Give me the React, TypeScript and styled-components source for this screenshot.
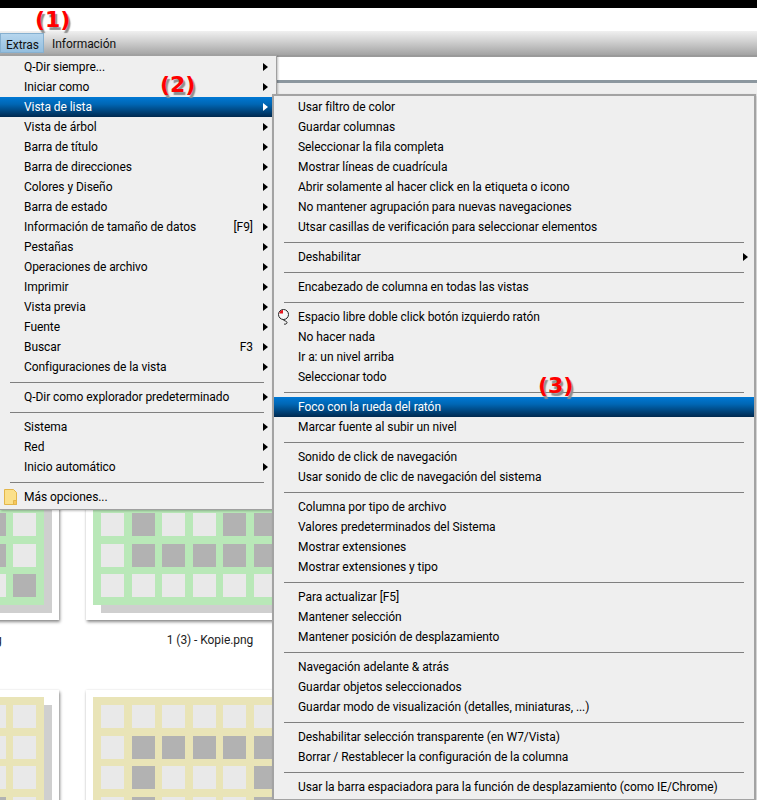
import React from "react";
import styled, { createGlobalStyle } from "styled-components";

const Global = createGlobalStyle`
  html, body { margin: 0; padding: 0; background: #fff; }
  body { font-family: "Roboto", "Noto Sans", sans-serif; font-size: 12px; letter-spacing: -0.06px; color: #000; }
`;

const Page = styled.div`
  position: relative;
  width: 757px;
  height: 800px;
  overflow: hidden;
  background: #fff;
  display: flex;
  flex-direction: column;
`;
const BlackBar = styled.div`height: 8px; background: #000; flex: none;`;
const TitleArea = styled.div`height: 23px; background: #fff; flex: none;`;
const MenuBar = styled.div`
  height: 24px;
  flex: none;
  display: flex;
  align-items: stretch;
  background: linear-gradient(#f0f0f0 0%, #cfcfcf 45%, #a3a3a3 100%);
`;
const TopItem = styled.div<{ $active?: boolean }>`
  padding: 0 6px 0 ${(p) => (p.$active ? "5px" : "8px")};
  line-height: 27px;
  box-sizing: border-box;
  color: #111;
  ${(p) => p.$active && `
    width: 44px;
    margin: 2px 0;
    background: linear-gradient(#b6d6ee, #94bede);
    border: 1px solid #86b0d0;
    line-height: 22px;
  `}
`;
const Toolbar = styled.div`
  height: 25px;
  flex: none;
  background: #fff;
  border-bottom: 3px solid #8c979f;
  box-shadow: inset 0 2px 0 #9a9a9a;
`;
const Content = styled.div`
  flex: 1;
  background: #fff;
  padding-top: 40px;
  overflow: hidden;
  box-shadow: inset 0 12px 0 #efefef;
`;
const ThumbRows = styled.div`
  display: grid;
  grid-template-columns: repeat(2, 244px);
  grid-auto-rows: 283.5px;
  column-gap: 27px;
  margin-left: -185px;
`;
const ThumbCell = styled.div`display: flex; flex-direction: column; align-items: center;`;
const Card = styled.div`
  position: relative;
  width: 244px;
  height: 213.5px;
  box-sizing: border-box;
  background: #fff;
  box-shadow: 1px 2px 3px rgba(0, 0, 0, 0.45), 0 0 2px rgba(0, 0, 0, 0.08);
  padding: 7px;
`;
const Sheet = styled.div<{ $color: string }>`
  width: 222px;
  height: 191px;
  background: ${(p) => p.$color};
  box-shadow: 8px 8px 0 #cfcfcf;
  box-sizing: border-box;
  padding: 8px;
  display: grid;
  grid-template-columns: repeat(7, 23px);
  grid-auto-rows: 23px;
  gap: 7.5px;
`;
const Pixel = styled.div<{ $on: boolean }>`background: ${(p) => (p.$on ? "#b2b2b2" : "#e9e9e9")};`;
const ThumbLabel = styled.div`
  margin: 12px 0 0 4px;
  line-height: 16px;
  color: #222;
  white-space: nowrap;
`;

const Menu = styled.div<{ $left: number; $top: number; $width: number; $height: number }>`
  position: absolute;
  left: ${(p) => p.$left}px;
  top: ${(p) => p.$top}px;
  width: ${(p) => p.$width}px;
  height: ${(p) => p.$height}px;
  box-sizing: border-box;
  background: #efefef;
  border: 1px solid #a0a0a0;
  box-shadow: 1px 1px 2px rgba(0,0,0,.25);
`;
const LeftMenu = styled(Menu)`
  padding: 1px 3px 1px 0;
  border-left: none;
`;
const SubMenu = styled(Menu)`
  padding: 1px 0 0 0;
  border-width: 2px;
  border-color: #a3a3a3;
  border-bottom-width: 1px;
`;
const Row = styled.div<{ $sel?: boolean; $indent: number }>`
  position: relative;
  height: 20px;
  box-sizing: border-box;
  padding-top: 1px;
  line-height: 19px;
  padding-left: ${(p) => p.$indent}px;
  white-space: nowrap;
  color: ${(p) => (p.$sel ? "#fff" : "#000")};
  ${(p) => p.$sel && `background: linear-gradient(#0078d4 0%, #0067b5 35%, #00294f 100%);`}
`;
const Shortcut = styled.span`
  position: absolute;
  right: 20px;
  top: 1px;
`;
const Arrow = styled.svg<{ $right: number }>`
  position: absolute;
  right: ${(p) => p.$right}px;
  top: 6px;
  width: 5px;
  height: 8px;
`;
const RowIcon = styled.svg<{ $left: number }>`
  position: absolute;
  left: ${(p) => p.$left}px;
  top: 1px;
  width: 18px;
  height: 18px;
`;
const Sep = styled.div<{ $left: number; $right: number }>`
  height: 10px;
  position: relative;
  &::after {
    content: "";
    position: absolute;
    left: ${(p) => p.$left}px;
    right: ${(p) => p.$right}px;
    top: 5px;
    height: 1px;
    background: #7f7f7f;
  }
`;
const Note = styled.div<{ $left: number; $top: number }>`
  position: absolute;
  left: ${(p) => p.$left}px;
  top: ${(p) => p.$top}px;
  font-family: "DejaVu Sans", sans-serif;
  font-weight: 700;
  font-size: 22px;
  letter-spacing: 0;
  line-height: 24px;
  color: #ff0000;
  text-shadow: 2px 3px 1px #8f8f8f;
  white-space: nowrap;
`;

type Item = { t?: string; arrow?: boolean; sel?: boolean; key?: string; icon?: "folder" | "mouse" };

const left: Item[] = [
  { t: "Q-Dir siempre...", arrow: true },
  { t: "Iniciar como", arrow: true },
  { t: "Vista de lista", arrow: true, sel: true },
  { t: "Vista de árbol", arrow: true },
  { t: "Barra de título", arrow: true },
  { t: "Barra de direcciones", arrow: true },
  { t: "Colores y Diseño", arrow: true },
  { t: "Barra de estado", arrow: true },
  { t: "Información de tamaño de datos", arrow: true, key: "[F9]" },
  { t: "Pestañas", arrow: true },
  { t: "Operaciones de archivo", arrow: true },
  { t: "Imprimir", arrow: true },
  { t: "Vista previa", arrow: true },
  { t: "Fuente", arrow: true },
  { t: "Buscar", arrow: true, key: "F3" },
  { t: "Configuraciones de la vista", arrow: true },
  {},
  { t: "Q-Dir como explorador predeterminado", arrow: true },
  {},
  { t: "Sistema", arrow: true },
  { t: "Red", arrow: true },
  { t: "Inicio automático", arrow: true },
  {},
  { t: "Más opciones...", icon: "folder" },
];

const sub: Item[] = [
  { t: "Usar filtro de color" },
  { t: "Guardar columnas" },
  { t: "Seleccionar la fila completa" },
  { t: "Mostrar líneas de cuadrícula" },
  { t: "Abrir solamente al hacer click en la etiqueta o icono" },
  { t: "No mantener agrupación para nuevas navegaciones" },
  { t: "Utsar casillas de verificación para seleccionar elementos" },
  {},
  { t: "Deshabilitar", arrow: true },
  {},
  { t: "Encabezado de columna en todas las vistas" },
  {},
  { t: "Espacio libre doble click botón izquierdo ratón", icon: "mouse" },
  { t: "No hacer nada" },
  { t: "Ir a: un nivel arriba" },
  { t: "Seleccionar todo" },
  {},
  { t: "Foco con la rueda del ratón", sel: true },
  { t: "Marcar fuente al subir un nivel" },
  {},
  { t: "Sonido de click de navegación" },
  { t: "Usar sonido de clic de navegación del sistema" },
  {},
  { t: "Columna por tipo de archivo" },
  { t: "Valores predeterminados del Sistema" },
  { t: "Mostrar extensiones" },
  { t: "Mostrar extensiones y tipo" },
  {},
  { t: "Para actualizar [F5]" },
  { t: "Mantener selección" },
  { t: "Mantener posición de desplazamiento" },
  {},
  { t: "Navegación adelante & atrás" },
  { t: "Guardar objetos seleccionados" },
  { t: "Guardar modo de visualización (detalles, miniaturas, ...)" },
  {},
  { t: "Deshabilitar selección transparente (en W7/Vista)" },
  { t: "Borrar / Restablecer la configuración de la columna" },
  {},
  { t: "Usar la barra espaciadora para la función de desplazamiento (como IE/Chrome)" },
];

const FolderIcon = () => (
  <RowIcon $left={3} viewBox="0 0 18 18">
    <path d="M1.500 1.500h9l3 3v12h-12z" fill="#fbe08a" stroke="#e3b64a" />
    <path d="M10.500 16.500v-4h3v4z" fill="#f6c65a" stroke="#e3b64a" />
  </RowIcon>
);
const MouseIcon = () => (
  <RowIcon $left={2} viewBox="0 0 18 18">
    <circle cx="7.500" cy="6.500" r="5" fill="#f7f7f7" stroke="#222" />
    <path d="M3.500 5.500C3.500 3.500 5 2 7 2v3.500z" fill="#e8141c" />
    <path d="M7 11.500c1 1.500 4 1.500 4 3s-2 2-3 1.500" fill="none" stroke="#222" />
  </RowIcon>
);

const renderItems = (items: Item[], indent: number, sepL: number, sepR: number, arrowRight: number) =>
  items.map((it, i) =>
    it.t ? (
      <Row key={i} $sel={it.sel} $indent={indent}>
        {it.icon === "folder" && <FolderIcon />}
        {it.icon === "mouse" && <MouseIcon />}
        {it.t}
        {it.key && <Shortcut>{it.key}</Shortcut>}
        {it.arrow && (
          <Arrow $right={arrowRight} viewBox="0 0 5 8">
            <path d="M0 0l5 4-5 4z" fill={it.sel ? "#fff" : "#000"} />
          </Arrow>
        )}
      </Row>
    ) : (
      <Sep key={i} $left={sepL} $right={sepR} />
    )
  );

const parse = (s: string) => s.split("").map((c) => c === "#");

// 6 rows, 7 columns; the leading rows lie under the menus.
const greenLeft = [".......", ".......", ".......", ".....#.", ".....#.", "......#"];
const greenRight = [".......", ".......", ".......", ".#..##.", ".#####.", "......."];
const yellowLeft = [".......", ".......", ".......", ".....#.", ".....#.", "......."];
const yellowRight = [".......", ".#####.", ".#...#.", ".#...#.", ".#...#.", "......."];

const Thumb = ({ color, rows, label }: { color: string; rows: string[]; label: string }) => (
  <ThumbCell>
    <Card>
      <Sheet $color={color}>
        {rows.flatMap((r, y) => parse(r).map((on, x) => <Pixel key={`${y}-${x}`} $on={on} />))}
      </Sheet>
    </Card>
    <ThumbLabel>{label}</ThumbLabel>
  </ThumbCell>
);

export default function App() {
  return (
    <Page>
      <Global />
      <BlackBar />
      <TitleArea />
      <MenuBar>
        <TopItem $active>Extras</TopItem>
        <TopItem>Información</TopItem>
      </MenuBar>
      <Toolbar />
      <Content>
        <ThumbRows>
          <Thumb color="#b9e8b8" rows={greenLeft} label="1 (2) - Kopie - Kopie.png" />
          <Thumb color="#b9e8b8" rows={greenRight} label="1 (3) - Kopie.png" />
          <Thumb color="#b9e8b8" rows={greenLeft} label="1 (2) - Kopie - Kopie.png" />
          <Thumb color="#b9e8b8" rows={greenRight} label="1 (3) - Kopie.png" />
          <Thumb color="#e9e4b7" rows={yellowLeft} label="2.png" />
          <Thumb color="#e9e4b7" rows={yellowRight} label="3.png" />
        </ThumbRows>
      </Content>
      <LeftMenu $left={0} $top={55} $width={277} $height={455}>
        {renderItems(left, 24, 10, 9, 5)}
      </LeftMenu>
      <SubMenu $left={272} $top={94} $width={484} $height={706}>
        {renderItems(sub, 24, 10, 10, 6)}
      </SubMenu>
      <Note $left={35} $top={8}>(1)</Note>
      <Note $left={160} $top={73}>(2)</Note>
      <Note $left={538} $top={374}>(3)</Note>
    </Page>
  );
}
